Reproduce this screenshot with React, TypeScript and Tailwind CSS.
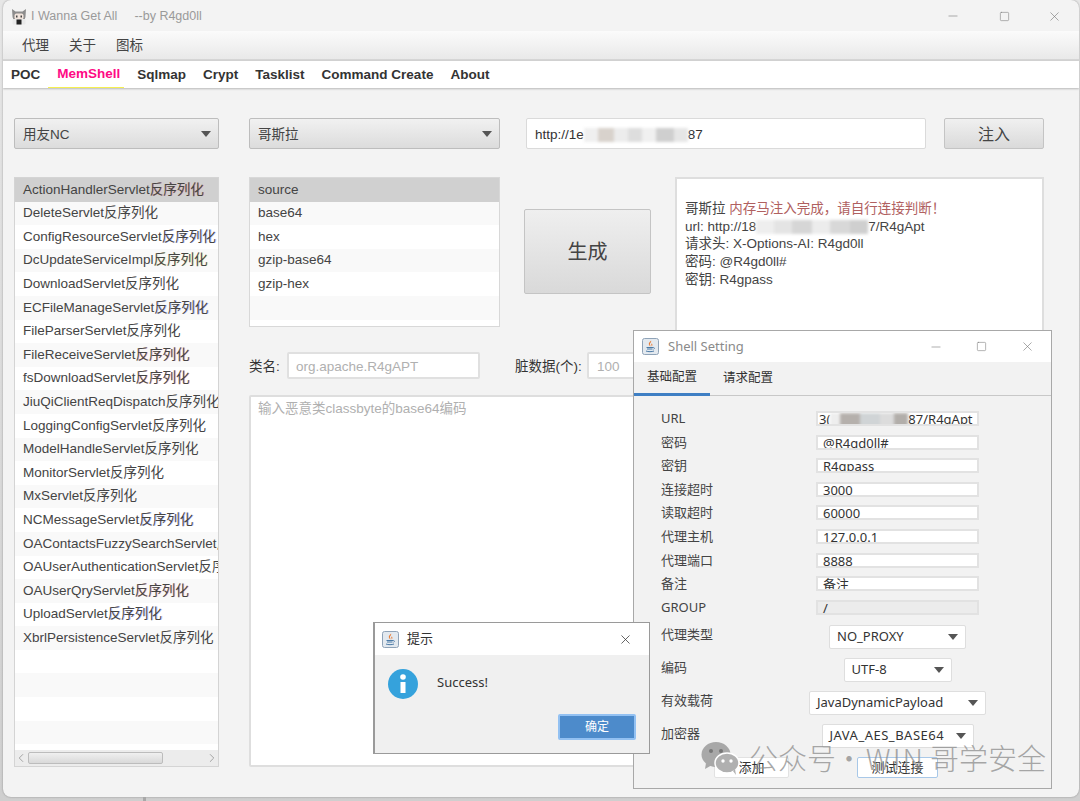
import { ChevronLeft, ChevronRight, Minus, Square, X } from 'lucide-react';

const servlets = [
  ['ActionHandlerServlet', 'r'],
  ['DeleteServlet', ''],
  ['ConfigResourceServlet', 'b'],
  ['DcUpdateServiceImpl', 'y'],
  ['DownloadServlet', ''],
  ['ECFileManageServlet', 'b'],
  ['FileParserServlet', ''],
  ['FileReceiveServlet', 'r'],
  ['fsDownloadServlet', 'r'],
  ['JiuQiClientReqDispatch', ''],
  ['LoggingConfigServlet', ''],
  ['ModelHandleServlet', ''],
  ['MonitorServlet', ''],
  ['MxServlet', ''],
  ['NCMessageServlet', 'b'],
  ['OAContactsFuzzySearchServlet', 'r'],
  ['OAUserAuthenticationServlet', ''],
  ['OAUserQryServlet', 'r'],
  ['UploadServlet', 'b'],
  ['XbrlPersistenceServlet', ''],
  ['', ''],
  ['', ''],
  ['', ''],
  ['', ''],
  ['', ''],
];

const tones: Record<string, string> = {
  r: '[text-shadow:1px_0_0_rgba(255,60,60,0.35)]',
  b: '[text-shadow:1px_0_0_rgba(70,70,255,0.3)]',
  y: '[text-shadow:1px_0_0_rgba(230,210,0,0.35)]',
  '': '',
};

const encodings = ['source', 'base64', 'hex', 'gzip-base64', 'gzip-hex', ''];

const fields = [
  ['密码', '@R4gd0ll#'],
  ['密钥', 'R4gpass'],
  ['连接超时', '3000'],
  ['读取超时', '60000'],
  ['代理主机', '127.0.0.1'],
  ['代理端口', '8888'],
  ['备注', '备注'],
];

const selects = [
  ['代理类型', 'NO_PROXY', 'w-[137px]'],
  ['编码', 'UTF-8', 'w-[108px]'],
  ['有效载荷', 'JavaDynamicPayload', 'w-[177px]'],
  ['加密器', 'JAVA_AES_BASE64', 'w-[152px] tracking-[0.5px]'],
];

const JavaIcon = () => (
  <svg viewBox="0 0 17 17" className="w-[17px] h-[17px] shrink-0">
    <rect x="0.5" y="0.5" width="16" height="16" rx="2" fill="#e3e9ef" stroke="#8fa3b8" />
    <path d="M9 2.5c1 1.6-2 2.6-1 4.6.3.6.6 1 .8 1.4-1.8-1.2-2.600-2.400-1.600-3.800C7.800 3.800 8.900 3.400 9 2.500z" fill="#e8762c" />
    <path d="M10.500 5c-1 .7-1.600 1.300-1 2.300.2.300.3.700.2 1.100.9-.9.900-1.700.3-2.300-.2-.3 0-.7.500-1.100z" fill="#e8762c" />
    <path d="M4.500 9.500h6.500M5 11h5.500M4 13c2 .9 6 .9 8 0" fill="none" stroke="#4b7aa6" strokeWidth="1" />
    <path d="M11 9.500c1.500-.3 2.200 1 .5 1.800" fill="none" stroke="#4b7aa6" strokeWidth="0.800" />
  </svg>
);

const AppIcon = () => (
  <svg viewBox="0 0 16 17" className="w-[16px] h-[17px] shrink-0">
    <path d="M1 1l3.500 2.500h7L15 1l-.5 7.500c0 1.500-1 3-2 3.500h-9c-1-.5-2-2-2-3.500z" fill="#8d8d8d" />
    <rect x="3.500" y="5.500" width="9" height="6" rx="2" fill="#f1e4dc" />
    <rect x="5" y="7.500" width="1.500" height="2" fill="#444" />
    <rect x="9.500" y="7.500" width="1.500" height="2" fill="#444" />
    <rect x="1.500" y="11" width="13" height="5.500" rx="1" fill="#e9e9e9" />
    <rect x="5.500" y="11.500" width="5" height="5" fill="#222" />
  </svg>
);

const Redact = ({ sizes }: { sizes: [number, string][] }) => (
  <span className="inline-flex h-[14px] align-middle blur-[1.5px]">
    {sizes.map(([w, c], i) => (
      <span key={i} className="h-full" style={{ width: w, backgroundColor: c }} />
    ))}
  </span>
);

const Caret = () => (
  <svg viewBox="0 0 10 6" className="w-[10px] h-[6px] shrink-0">
    <path d="M0 0h10L5 6z" fill="#555" />
  </svg>
);

const Combo = ({ label }: { label: string }) => (
  <div className="h-[31px] flex items-center justify-between pl-[8px] pr-[7px] rounded-[2px] border border-[#bdbdbd] bg-gradient-to-b from-[#f1f1f1] to-[#dcdcdc] text-[13.5px] text-[#444]">
    <span className="pt-[3px]">{label}</span>
    <Caret />
  </div>
);

const ToolBtn = ({ label, active }: { label: string; active?: boolean }) => (
  <div
    className={`h-[21px] rounded-[2px] border bg-white flex items-center justify-center text-[13px] text-[#333] ${
      active ? 'w-[81px] border-[#a8c8e8]' : 'w-[75px] border-[#e2e2e2]'
    }`}
  >
    {label}
  </div>
);

export default function App() {
  return (
    <div className="relative w-[1080px] h-[801px] overflow-hidden bg-gradient-to-b from-[#e6e6e6] to-[#cfcfcf] [font-family:'Liberation_Sans','Noto_Sans_CJK_SC',sans-serif]">
      {/* Main window */}
      <div className="ml-[3px] w-[1076px] h-[797px] rounded-[8px] bg-[#f3f3f3] overflow-hidden flex flex-col shadow-[0_0_2px_rgba(0,0,0,0.35)]">
        <div className="h-[31px] shrink-0 flex items-center pl-[8px] pt-[1px] text-[12.5px] text-[#9a9a9a]">
          <AppIcon />
          <span className="ml-[4px]">I Wanna Get All</span>
          <span className="ml-[17px]">--by R4gd0ll</span>
          <div className="ml-auto flex items-center text-[#777]">
            <Minus size={14} strokeWidth={1} />
            <Square size={11} strokeWidth={1.2} className="ml-[39px]" />
            <X size={15} strokeWidth={1} className="ml-[37px] mr-[17px]" />
          </div>
        </div>

        <div className="h-[30px] shrink-0 flex items-center gap-[20px] pl-[19px] pt-[3px] text-[13.5px] text-[#444] bg-gradient-to-b from-[#fbfbfb] to-[#e9e9e9] border-b-2 border-[#d5d5d5]">
          <span>代理</span>
          <span>关于</span>
          <span>图标</span>
        </div>

        <div className="h-[27px] shrink-0 flex items-center gap-[17px] pl-[8px] pt-[1px] bg-white text-[13.5px] font-bold text-[#333] shadow-[0_1px_2px_rgba(0,0,0,0.25)]">
          <span>POC</span>
          <span className="-ml-[9px] pl-[9px] -mr-[4px] pr-[4px] h-full flex items-center text-[#ff0a85] border-b border-[#f5f050]">MemShell</span>
          <span>Sqlmap</span>
          <span>Crypt</span>
          <span>Tasklist</span>
          <span>Command Create</span>
          <span>About</span>
        </div>

        <div className="flex-1 min-h-0 pl-[11px] pt-[30px] flex flex-col">
          <div className="flex items-center">
            <div className="w-[205px]"><Combo label="用友NC" /></div>
            <div className="w-[251px] ml-[30px]"><Combo label="哥斯拉" /></div>
            <div className="w-[400px] h-[31px] ml-[26px] flex items-center rounded-[2px] border border-[#dadada] bg-white pl-[8px] pt-[3px] text-[13.5px] text-[#333]">
              http://1e
              <Redact sizes={[[14, '#efefef'], [16, '#d8d2cc'], [14, '#ececec'], [14, '#dddddd'], [14, '#f0f0f0'], [18, '#cfcfcf'], [14, '#e6e6e6']]} />
              87
            </div>
            <div className="w-[100px] h-[31px] ml-[18px] pt-[2px] flex items-center justify-center rounded-[2px] border border-[#c4c4c4] bg-gradient-to-b from-[#f0f0f0] to-[#dadada] text-[16px] text-[#444]">注入</div>
          </div>

          <div className="flex mt-[28px] gap-[30px]">
            <div className="w-[205px] h-[590px] border border-[#d4d4d4] bg-white overflow-hidden flex flex-col">
              <div className="flex-1 min-h-0 overflow-hidden">
                {servlets.map(([name, tone], i) => (
                  <div
                    key={i}
                    className={`h-[23.6px] flex items-center pl-[8px] whitespace-nowrap text-[13.5px] text-[#444] ${
                      i === 0 ? 'bg-[#d0d0d0]' : i % 2 === 1 ? 'bg-[#f9f9f9]' : 'bg-white'
                    }`}
                  >
                    {name}
                    {name && <span className={tones[tone]}>反序列化</span>}
                  </div>
                ))}
              </div>
              <div className="h-[16px] shrink-0 bg-[#ececec] flex items-center text-[#999]">
                <ChevronLeft size={14} strokeWidth={1.5} className="-ml-[1px]" />
                <div className="w-[135px] h-[12px] border border-[#bcbcbc] rounded-[2px] bg-gradient-to-b from-[#f0f0f0] to-[#d9d9d9]" />
                <ChevronRight size={14} strokeWidth={1.5} className="ml-auto -mr-[1px]" />
              </div>
            </div>

            <div className="w-[795px] h-[590px] grid grid-cols-[251px_24px_127px_24px_369px] grid-rows-[150px_25px_27px_16px_1fr]">
              <div className="col-start-1 row-start-1 border border-[#d8d8d8] bg-white overflow-hidden">
                {encodings.map((name, i) => (
                  <div
                    key={i}
                    className={`h-[23.6px] flex items-center pl-[8px] text-[13.5px] text-[#444] ${
                      i === 0 ? 'bg-[#d0d0d0]' : i % 2 === 1 ? 'bg-[#f9f9f9]' : 'bg-white'
                    }`}
                  >
                    {name}
                  </div>
                ))}
              </div>

              <div className="col-start-3 row-start-1 mt-[32px] h-[85px] flex items-center justify-center rounded-[2px] border border-[#c4c4c4] bg-gradient-to-b from-[#efefef] to-[#d9d9d9] text-[20px] text-[#444]">生成</div>

              <div className="col-start-5 row-start-1 row-span-3 border-2 border-[#dedede] bg-white px-[8px] pt-[21px] text-[13.5px] leading-[17.7px] text-[#444]">
                <div>哥斯拉 <span className="text-[#b06060]">内存马注入完成{'\uFF0C'}请自行连接判断{'\uFF01'}</span></div>
                <div>
                  url: http://18
                  <Redact sizes={[[18, '#eeeeee'], [18, '#e4e4e4'], [20, '#d6d6d6'], [18, '#ececec'], [20, '#d8d8d8'], [18, '#cfcfcf']]} />
                  7/R4gApt
                </div>
                <div>请求头: X-Options-AI: R4gd0ll</div>
                <div>密码: @R4gd0ll#</div>
                <div>密钥: R4gpass</div>
              </div>

              <div className="col-start-1 col-span-4 row-start-3 flex items-center text-[13.5px] text-[#333]">
                <span className="w-[38px] pt-[3px]">类名:</span>
                <div className="w-[193px] h-[27px] flex items-center rounded-[2px] border-2 border-[#e0e0e0] bg-white pl-[7px] pt-[3px] text-[#b0b0b0]">org.apache.R4gAPT</div>
                <span className="ml-[35px] w-[72px] pt-[3px]">脏数据(个):</span>
                <div className="w-[72px] h-[27px] flex items-center rounded-[2px] border-2 border-[#e0e0e0] bg-white pl-[8px] pt-[3px] text-[#b0b0b0]">100</div>
              </div>

              <div className="col-start-1 col-span-5 row-start-5 border-2 border-[#dedede] rounded-[2px] bg-white pl-[7px] pt-[2px] text-[13.5px] text-[#b0b0b0]">
                输入恶意类classbyte的base64编码
              </div>
            </div>
          </div>
        </div>
      </div>

      {/* Taskbar remnants below the window */}
      <div className="absolute left-[143px] top-[797px] w-[3px] h-[4px] bg-[#a8a8a8]" />

      {/* Shell Setting window */}
      <div className="absolute left-[633px] top-[330px] w-[419px] h-[459px] border border-[#a8a8a8] bg-[#f2f2f2] flex flex-col [font-family:'Noto_Sans','Noto_Sans_CJK_SC',sans-serif]">
        <div className="h-[31px] shrink-0 bg-white flex items-center pl-[8px] text-[13px] text-[#8a8a8a]">
          <JavaIcon />
          <span className="ml-[9px]">Shell Setting</span>
          <div className="ml-auto flex items-center text-[#777]">
            <Minus size={14} strokeWidth={1} />
            <Square size={11} strokeWidth={1.2} className="ml-[33px]" />
            <X size={15} strokeWidth={1} className="ml-[33px] mr-[16px]" />
          </div>
        </div>

        <div className="h-[34px] shrink-0 flex text-[12.5px] text-[#333] border-b border-[#c8c8c8]">
          <div className="w-[76px] flex items-center justify-center border-b-[3px] border-[#3f7fc4] -mb-px">基础配置</div>
          <div className="ml-[13px] flex items-center">请求配置</div>
        </div>

        <div className="flex-1 pl-[27px] pt-[15px] text-[13px] text-[#444] flex flex-col">
          <div className="h-[23.6px] flex items-start">
            <span className="w-[155px] leading-[14px]">URL</span>
            <div className="w-[163px] h-[15px] border-2 border-[#e2e2e2] bg-white overflow-hidden flex items-start pl-[1px] leading-[13px] text-[#333] whitespace-nowrap">
              3(
              <Redact sizes={[[10, '#eeeeee'], [20, '#b5b0ac'], [20, '#d0d4d6'], [14, '#dcdcdc'], [14, '#b2aeaa']]} />
              87/R4gApt
            </div>
          </div>
          {fields.map(([label, value]) => (
            <div key={label} className="h-[23.6px] flex items-start">
              <span className="w-[155px] leading-[14px]">{label}</span>
              <div className="w-[163px] h-[15px] border-2 border-[#e2e2e2] bg-white overflow-hidden pl-[5px] leading-[13px] text-[#333]">{value}</div>
            </div>
          ))}
          <div className="h-[25px] flex items-start">
            <span className="w-[155px] leading-[14px]">GROUP</span>
            <div className="w-[163px] h-[15px] border-2 border-[#e2e2e2] bg-[#ececec] overflow-hidden pl-[5px] leading-[13px] text-[#333]">/</div>
          </div>

          {selects.map(([label, value, width]) => (
            <div key={label} className="h-[33px] flex items-start">
              <span className="w-[155px] leading-[19px]">{label}</span>
              <div className="w-[163px] flex justify-center">
                <div className={`${width} shrink-0 h-[24px] border border-[#dedede] rounded-[2px] bg-white flex items-center justify-between pl-[7px] pr-[7px] text-[#333]`}>
                  <span>{value}</span>
                  <Caret />
                </div>
              </div>
            </div>
          ))}

          <div className="flex items-start pl-[53px] gap-[68px]">
            <ToolBtn label="添加" />
            <ToolBtn label="测试连接" active />
          </div>
        </div>
      </div>

      {/* Success dialog */}
      <div className="absolute left-[373px] top-[622px] w-[277px] h-[132px] border border-[#9a9a9a] border-l-2 bg-[#f0f0f0] flex flex-col [font-family:'Noto_Sans','Noto_Sans_CJK_SC',sans-serif]">
        <div className="h-[32px] shrink-0 bg-white flex items-center pl-[7px] text-[13px] text-[#333]">
          <JavaIcon />
          <span className="ml-[8px]">提示</span>
          <X size={15} strokeWidth={1.2} className="ml-auto mr-[16px] text-[#333]" />
        </div>
        <div className="flex-1 pl-[13px] pt-[14px] relative">
          <div className="flex items-start">
            <svg viewBox="0 0 30 30" className="w-[30px] h-[30px] shrink-0">
              <circle cx="15" cy="15" r="15" fill="#35a2dc" />
              <circle cx="15" cy="8" r="2.800" fill="#fff" />
              <rect x="12.500" y="13" width="5" height="11" fill="#fff" />
            </svg>
            <span className="ml-[19px] text-[13px] text-[#333] leading-[26px]">Success!</span>
          </div>
          <div className="absolute right-[13px] bottom-[13px] w-[78px] h-[26px] rounded-[2px] bg-[#4d8bcb] border-2 border-[#93c1f2] flex items-center justify-center text-[12px] text-white">确定</div>
        </div>
      </div>

      {/* Watermark */}
      <div className="absolute left-[700px] top-[736px] flex items-center text-[#8c8c8c]/75 text-[29px] font-light whitespace-nowrap pointer-events-none [font-family:'Noto_Sans_CJK_SC',sans-serif]">
        <svg viewBox="0 0 42 34" className="w-[42px] h-[34px] shrink-0">
          <ellipse cx="16" cy="13.500" rx="14.500" ry="12.500" fill="#a8a8a8" />
          <path d="M6 22l-1 6 7-4z" fill="#a8a8a8" />
          <circle cx="11" cy="10" r="2" fill="#777" />
          <circle cx="21" cy="10" r="2" fill="#777" />
          <ellipse cx="27" cy="22" rx="12" ry="10" fill="#b0b0b0" stroke="#fff" strokeWidth="1.500" />
          <path d="M33 30l3 4-1-6z" fill="#b0b0b0" />
          <circle cx="23" cy="20" r="1.700" fill="#fff" />
          <circle cx="31" cy="20" r="1.700" fill="#fff" />
        </svg>
        <span className="ml-[7px]">
          公众号 <span className="-ml-[8px] mr-[2px]">·</span> <span className="-ml-[6px] tracking-[2px] mr-[5px]">WIN</span>哥学安全
        </span>
      </div>
    </div>
  );
}
